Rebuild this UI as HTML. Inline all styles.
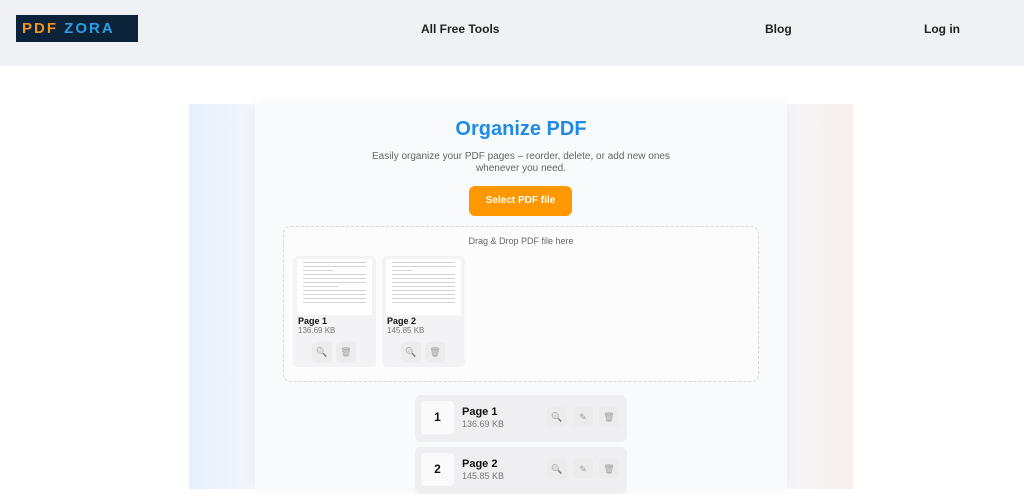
<!DOCTYPE html><html><head><meta charset="utf-8"><style>
*{margin:0;padding:0;box-sizing:border-box}
body{width:1024px;height:489px;overflow:hidden;background:#fff;font-family:"Liberation Sans",sans-serif;position:relative;color:#111}
.hdr{position:absolute;left:0;top:0;width:1024px;height:66px;background:#f0f1f5}
.logo{position:absolute;left:16px;top:15px;width:122px;height:27px;background:#0b2238;font-weight:bold;font-size:15px;letter-spacing:2px;line-height:27px;padding-left:6px}
.nav{position:absolute;top:22px;font-size:12px;font-weight:bold;color:#222}
.sec{position:absolute;left:189px;top:104px;width:664px;height:385px;background:linear-gradient(90deg,#e6f0fb 0%,#f3f6fb 10%,#f6f7f9 90%,#f8efeb 100%)}
.card{position:absolute;left:255px;top:104px;width:532px;height:385px;background:#f9fafc;box-shadow:0 0 14px rgba(0,0,0,.05)}
.abs{position:absolute}
.thumb{position:absolute;top:256px;width:83px;height:111px;background:#f3f3f5;border-radius:5px}
.thumb .pg{position:absolute;left:4px;top:3px;width:75px;height:56px;background:#fff}
.thumb .pg i{display:block;height:1px;background:#d2d2d6;margin:3px 6px 0}
.ib{position:absolute;width:20px;height:20px;background:#ebebee;border-radius:4px;font-size:9px;text-align:center;line-height:20px;color:#888;filter:grayscale(1);opacity:.8}
.row{position:absolute;left:415px;width:212px;height:47px;background:#efeff1;border-radius:6px}
.num{position:absolute;left:6px;top:6px;width:33px;height:33px;background:#fafafb;border-radius:4px;font-weight:bold;font-size:12px;text-align:center;line-height:33px}
</style></head><body>
<div class="hdr">
<div class="logo"><span style="color:#f7941d">PDF</span> <span style="color:#2a9fe4">ZORA</span></div>
<div class="nav" style="left:421px">All Free Tools</div>
<div class="nav" style="left:765px">Blog</div>
<div class="nav" style="left:924px">Log in</div>
</div>
<div class="sec"></div>
<div class="card"></div>
<div class="abs" style="left:255px;width:532px;top:118px;text-align:center;font-size:20px;font-weight:bold;color:#1f8be6">Organize PDF</div>
<div class="abs" style="left:255px;width:532px;top:151px;text-align:center;font-size:10px;line-height:12px;color:#666">Easily organize your PDF pages – reorder, delete, or add new ones<br>whenever you need.</div>
<div class="abs" style="left:469px;top:186px;width:103px;height:30px;background:#ff9800;border-radius:6px;color:#fff;font-size:10px;font-weight:bold;text-align:center;line-height:30px">Select PDF file</div>
<div class="abs" style="left:283px;top:226px;width:476px;height:156px;border:1px dashed #d6d6da;border-radius:8px;background:#fcfcfd"></div>
<div class="abs" style="left:283px;width:476px;top:236px;text-align:center;font-size:9px;color:#666">Drag &amp; Drop PDF file here</div>
<div class="thumb" style="left:293px"><div class="pg"><i></i><i></i><i style="width:30px"></i><i></i><i></i><i></i><i style="width:35px"></i><i></i><i></i><i></i><i></i></div>
<div class="abs" style="left:5px;top:60px;font-size:9px;font-weight:bold">Page 1</div><div class="abs" style="left:5px;top:70px;font-size:8px;color:#777">136.69 KB</div>
<div class="ib" style="left:19px;top:86px">🔍</div><div class="ib" style="left:43px;top:86px">🗑</div></div>
<div class="thumb" style="left:382px"><div class="pg"><i></i><i></i><i style="width:20px"></i><i></i><i></i><i></i><i></i><i></i><i></i><i></i><i></i></div>
<div class="abs" style="left:5px;top:60px;font-size:9px;font-weight:bold">Page 2</div><div class="abs" style="left:5px;top:70px;font-size:8px;color:#777">145.85 KB</div>
<div class="ib" style="left:19px;top:86px">🔍</div><div class="ib" style="left:43px;top:86px">🗑</div></div>
<div class="row" style="top:395px"><div class="num">1</div>
<div class="abs" style="left:47px;top:11px;font-size:11px;font-weight:bold">Page 1</div><div class="abs" style="left:47px;top:24px;font-size:9px;color:#777">136.69 KB</div>
<div class="ib" style="left:132px;top:12px">🔍</div><div class="ib" style="left:158px;top:12px">✎</div><div class="ib" style="left:184px;top:12px">🗑</div></div>
<div class="row" style="top:447px"><div class="num">2</div>
<div class="abs" style="left:47px;top:11px;font-size:11px;font-weight:bold">Page 2</div><div class="abs" style="left:47px;top:24px;font-size:9px;color:#777">145.85 KB</div>
<div class="ib" style="left:132px;top:12px">🔍</div><div class="ib" style="left:158px;top:12px">✎</div><div class="ib" style="left:184px;top:12px">🗑</div></div>
</body></html>
